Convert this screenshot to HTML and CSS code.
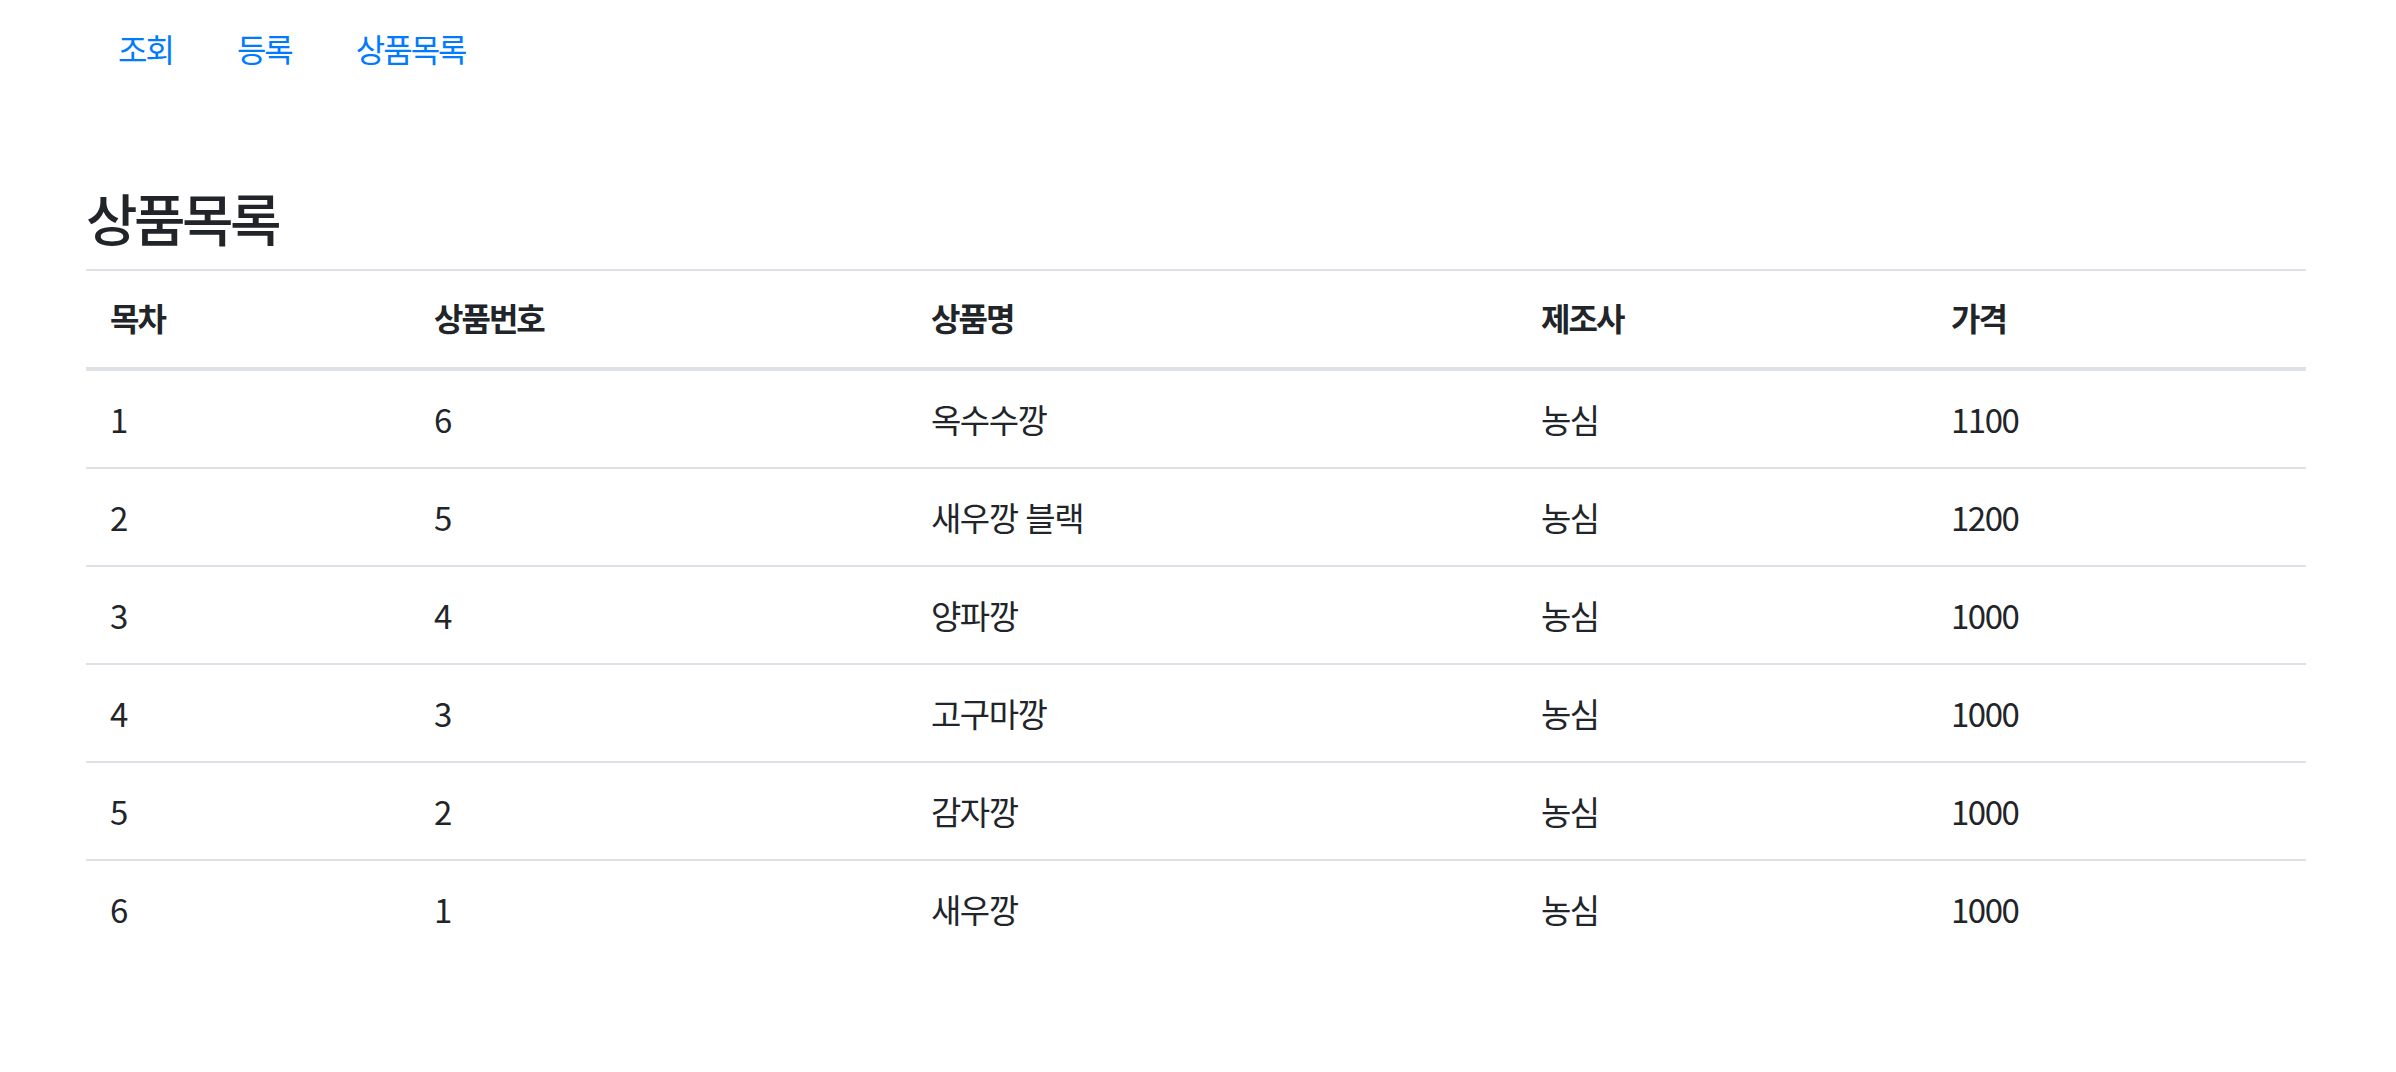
FILE: index.html
```html
<!DOCTYPE html>
<html lang="ko">
<head>
	<meta charset="utf-8">
	<title>상품목록</title>
	<link rel="stylesheet" href="styles.css">
</head>
<body>
	<div class="container">
		<ul class="nav">
			<li><a href="#" class="nav_link">조회</a></li>
			<li><a href="#" class="nav_link">등록</a></li>
			<li><a href="#" class="nav_link">상품목록</a></li>
		</ul>

		<h3 class="page_title">상품목록</h3>

		<table class="goods_table">
			<thead>
				<tr>
					<th class="col_idx">목차</th>
					<th class="col_no">상품번호</th>
					<th class="col_name">상품명</th>
					<th class="col_maker">제조사</th>
					<th class="col_price">가격</th>
				</tr>
			</thead>
			<tbody>
				<tr><td>1</td><td>6</td><td>옥수수깡</td><td>농심</td><td>1100</td></tr>
				<tr><td>2</td><td>5</td><td>새우깡 블랙</td><td>농심</td><td>1200</td></tr>
				<tr><td>3</td><td>4</td><td>양파깡</td><td>농심</td><td>1000</td></tr>
				<tr><td>4</td><td>3</td><td>고구마깡</td><td>농심</td><td>1000</td></tr>
				<tr><td>5</td><td>2</td><td>감자깡</td><td>농심</td><td>1000</td></tr>
				<tr><td>6</td><td>1</td><td>새우깡</td><td>농심</td><td>1000</td></tr>
			</tbody>
		</table>
	</div>
</body>
</html>
```

FILE: styles.css
```css
body {
	margin: 0;
	background-color: #fff;
	color: #212529;
	font-family: "Noto Sans CJK KR", "Noto Sans", sans-serif;
	font-size: 32px;
	line-height: 48px;
	letter-spacing: -2px;
}

.container {
	width: 2220px;
	margin-left: 86px;
}

.nav {
	display: flex;
	list-style: none;
	margin: 8px 0 0 0;
	padding: 0;
}

.nav_link {
	display: block;
	padding: 16px 32px;
	color: #007bff;
	text-decoration: none;
}

.page_title {
	margin: 96px 0 20px 0;
	font-size: 56px;
	line-height: 65px;
	font-weight: 500;
	letter-spacing: -3.5px;
}

.goods_table {
	width: 100%;
	table-layout: fixed;
	border-collapse: collapse;
}

.goods_table th,
.goods_table td {
	padding: 22px 24px 26px 24px;
	text-align: left;
	vertical-align: top;
	border-top: 2px solid #dee2e6;
}

.goods_table td {
	padding-top: 24px;
	padding-bottom: 24px;
	font-size: 33px;
	letter-spacing: -1.5px;
}

.goods_table thead th {
	font-weight: bold;
	border-bottom: 4px solid #dee2e6;
}

/* widths without the 24px padding on each side */
.col_idx { width: 276px; }
.col_no { width: 449px; }
.col_name { width: 562px; }
.col_maker { width: 362px; }
.col_price { width: 331px; }
```
